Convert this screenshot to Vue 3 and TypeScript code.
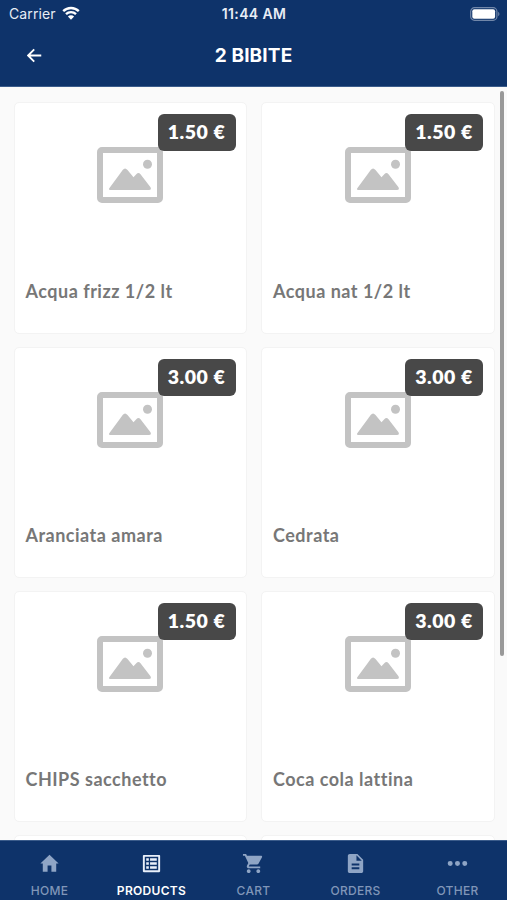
<script setup lang="ts">
interface Product {
  name: string
  price: string
}

interface Tab {
  label: string
  icon: string
  active?: boolean
}

const products: Product[] = [
  { name: 'Acqua frizz 1/2 lt', price: '1.50 €' },
  { name: 'Acqua nat 1/2 lt', price: '1.50 €' },
  { name: 'Aranciata amara', price: '3.00 €' },
  { name: 'Cedrata', price: '3.00 €' },
  { name: 'CHIPS sacchetto', price: '1.50 €' },
  { name: 'Coca cola lattina', price: '3.00 €' },
]

const tabs: Tab[] = [
  { label: 'HOME', icon: 'M10 20.5v-6.500h4v6.500h5v-8.500h2.500L12 2.800 2.500 12h2.500v8.500z' },
  {
    label: 'PRODUCTS',
    icon: 'M19 5v14H5V5h14m1.100-2H3.900c-.5 0-.9.4-.9.9v16.200c0 .4.4.9.9.9h16.200c.4 0 .9-.5.9-.9V3.900c0-.5-.5-.9-.9-.9zM10.500 6.500h7v2.700h-7zM10.500 10.650h7v2.700h-7zM10.500 14.800h7v2.700h-7zM6.500 6.500h2.700v2.700H6.500zM6.500 10.650h2.700v2.700H6.500zM6.500 14.800h2.700v2.700H6.500z',
    active: true,
  },
  {
    label: 'CART',
    icon: 'M7 18c-1.100 0-1.990.9-1.990 2S5.900 22 7 22s2-.9 2-2-.9-2-2-2zM1 2v2h2l3.600 7.590-1.350 2.450c-.16.28-.25.61-.25.96 0 1.100.9 2 2 2h12v-2H7.420c-.14 0-.25-.11-.25-.25l.03-.12.9-1.630h7.450c.75 0 1.410-.41 1.750-1.030l3.580-6.490c.08-.14.12-.31.12-.48 0-.55-.45-1-1-1H5.210l-.94-2H1zm16 16c-1.100 0-1.990.9-1.990 2s.89 2 1.990 2 2-.9 2-2-.9-2-2-2z',
  },
  {
    label: 'ORDERS',
    icon: 'M14 2H6c-1.100 0-1.990.9-1.990 2L4 20c0 1.100.89 2 1.990 2H18c1.100 0 2-.9 2-2V8l-6-6zm2 16H8v-2h8v2zm0-4H8v-2h8v2zm-3-5V3.500L18.500 9H13z',
  },
  {
    label: 'OTHER',
    icon: 'M4.400 9.400a2.600 2.600 0 1 0 0 5.200 2.600 2.600 0 1 0 0-5.200zm7.600 0a2.600 2.600 0 1 0 0 5.200 2.600 2.600 0 1 0 0-5.200zm7.600 0a2.600 2.600 0 1 0 0 5.200 2.600 2.600 0 1 0 0-5.200z',
  },
]
</script>

<template>
  <div class="screen">
    <header class="header">
      <div class="status">
        <div class="carrier">
          <span>Carrier</span>
          <svg class="wifi" viewBox="0 0 18 14">
            <path d="M1.200 5.100a11.200 11.200 0 0 1 15.600 0M4 8.100a7.200 7.200 0 0 1 10 0" />
            <path class="solid" d="M9 13.700 5.900 10.500a4.400 4.400 0 0 1 6.200 0z" />
          </svg>
        </div>
        <span class="time">11:44 AM</span>
        <svg class="battery" viewBox="0 0 30 14">
          <rect class="shell" x=".7" y=".7" width="26.200" height="12.600" rx="3.800" />
          <rect class="charge" x="2.300" y="2.300" width="22.800" height="9.400" rx="2" />
          <path class="tip" d="M28.200 4.800c1.700.7 1.700 3.700 0 4.400z" />
        </svg>
      </div>
      <div class="titlebar">
        <button class="back" aria-label="Back">
          <svg viewBox="0 0 16 16"><path d="M15.200 8H1.500M7.700 1.500 1.200 8l6.500 6.500" /></svg>
        </button>
        <h1>2 BIBITE</h1>
        <span></span>
      </div>
    </header>

    <main class="content">
      <div class="grid">
        <article v-for="product in products" :key="product.name" class="card">
          <svg class="placeholder" viewBox="0 0 66 56">
            <rect class="frame" x="3" y="3" width="60" height="50" rx="2" />
            <circle cx="50.500" cy="17.300" r="4.500" />
            <path d="M12.300 41.300 25.700 23Q28 20 30.500 23L36.500 30.200 39.500 27.100Q41.500 25 43.500 27.300L53.500 40.300Q54.800 43 52 43H13.200Q11.300 43 12.300 41.300z" />
          </svg>
          <span class="price">{{ product.price }}</span>
          <h2>{{ product.name }}</h2>
        </article>
        <article class="card"></article>
        <article class="card"></article>
      </div>
      <div class="scrollbar"></div>
    </main>

    <nav class="tabs">
      <a v-for="tab in tabs" :key="tab.label" class="tab" :class="{ active: tab.active }">
        <svg viewBox="0 0 24 24"><path :d="tab.icon" /></svg>
        <span>{{ tab.label }}</span>
      </a>
    </nav>
  </div>
</template>

<style>
body {
  margin: 0;
}
</style>

<style scoped>
.screen {
  height: 900px;
  display: flex;
  flex-direction: column;
  overflow: hidden;
  background: #fafafa;
  font-family: Inter, "Liberation Sans", sans-serif;
}

.header {
  height: 86.500px;
  box-sizing: border-box;
  flex: none;
  background: #0e336a;
  border-bottom: 1px solid #3b5c8b;
  color: #fff;
}

.status {
  height: 27px;
  padding: 0 8px 0 9px;
  display: grid;
  grid-template-columns: 1fr auto 1fr;
  align-items: center;
  font-size: 14px;
  color: #e8edf5;
}

.carrier {
  display: flex;
  align-items: center;
  gap: 6px;
  letter-spacing: 0.1px;
}

.wifi {
  width: 18px;
  height: 14px;
  margin-top: -2px;
  fill: none;
  stroke: #fff;
  stroke-width: 2.400;
}

.wifi .solid {
  fill: #fff;
  stroke: none;
}

.time {
  font-weight: 600;
  font-size: 14px;
  letter-spacing: 0.350px;
}

.battery {
  width: 30px;
  height: 14px;
  justify-self: end;
  margin-right: -1px;
}

.shell {
  fill: none;
  stroke: #7187a9;
  stroke-width: 1.200;
}

.charge {
  fill: #fff;
}

.tip {
  fill: #7187a9;
}

.titlebar {
  height: 58px;
  display: grid;
  grid-template-columns: 1fr auto 1fr;
  align-items: center;
}

.back {
  display: flex;
  margin: -1px 0 0 27px;
  padding: 0;
  border: 0;
  background: none;
}

.back svg {
  width: 15px;
  height: 15px;
  fill: none;
  stroke: #fff;
  stroke-width: 2;
}

h1 {
  margin: 0;
  font-size: 19px;
  font-weight: 700;
  line-height: 24px;
  letter-spacing: 0.150px;
}

.content {
  flex: 1;
  min-height: 0;
  position: relative;
  overflow: hidden;
}

.grid {
  display: grid;
  grid-template-columns: 1fr 1fr;
  grid-auto-rows: 231.300px;
  gap: 13px 14px;
  padding: 15.900px 12.500px 0 13.500px;
}

.card {
  position: relative;
  box-sizing: border-box;
  display: flex;
  flex-direction: column;
  background: #fff;
  border: 1px solid #f3f3f3;
  border-radius: 5px;
}

.placeholder {
  width: 66px;
  height: 56px;
  margin: 44px auto 0;
  fill: #c3c3c3;
}

.frame {
  fill: none;
  stroke: #c3c3c3;
  stroke-width: 6;
}

.price {
  position: absolute;
  top: 11px;
  right: 10.500px;
  width: 78px;
  height: 37px;
  border-radius: 6px;
  background: #484848;
  color: #fff;
  font: 800 19.500px/36px Lato, sans-serif;
  letter-spacing: 0.5px;
  text-align: center;
}

h2 {
  margin: 75.500px 11px 0;
  color: #777;
  font: 700 18px/24px Lato, sans-serif;
  letter-spacing: 0.5px;
  white-space: nowrap;
}

.scrollbar {
  position: absolute;
  top: 4px;
  right: 3.500px;
  width: 4px;
  height: 565px;
  border-radius: 2px;
  background: #999;
}

.tabs {
  height: 60px;
  box-sizing: border-box;
  flex: none;
  display: grid;
  grid-template-columns: repeat(5, 102px);
  margin: 0 -2px;
  background: #0e336a;
  border-top: 1px solid #3b5c8b;
}

.tab {
  display: flex;
  flex-direction: column;
  align-items: center;
  padding-top: 11px;
  gap: 8px;
  color: #8096b8;
  font-size: 12px;
  line-height: 16px;
  font-weight: 500;
  letter-spacing: 0.3px;
}

.tab span {
  padding-left: 1px;
}

.tab svg {
  width: 23px;
  height: 23px;
  fill: #8fa5c5;
}

.tab.active {
  color: #fff;
  font-weight: 600;
}

.tab.active svg {
  fill: #e9f0fa;
}
</style>
